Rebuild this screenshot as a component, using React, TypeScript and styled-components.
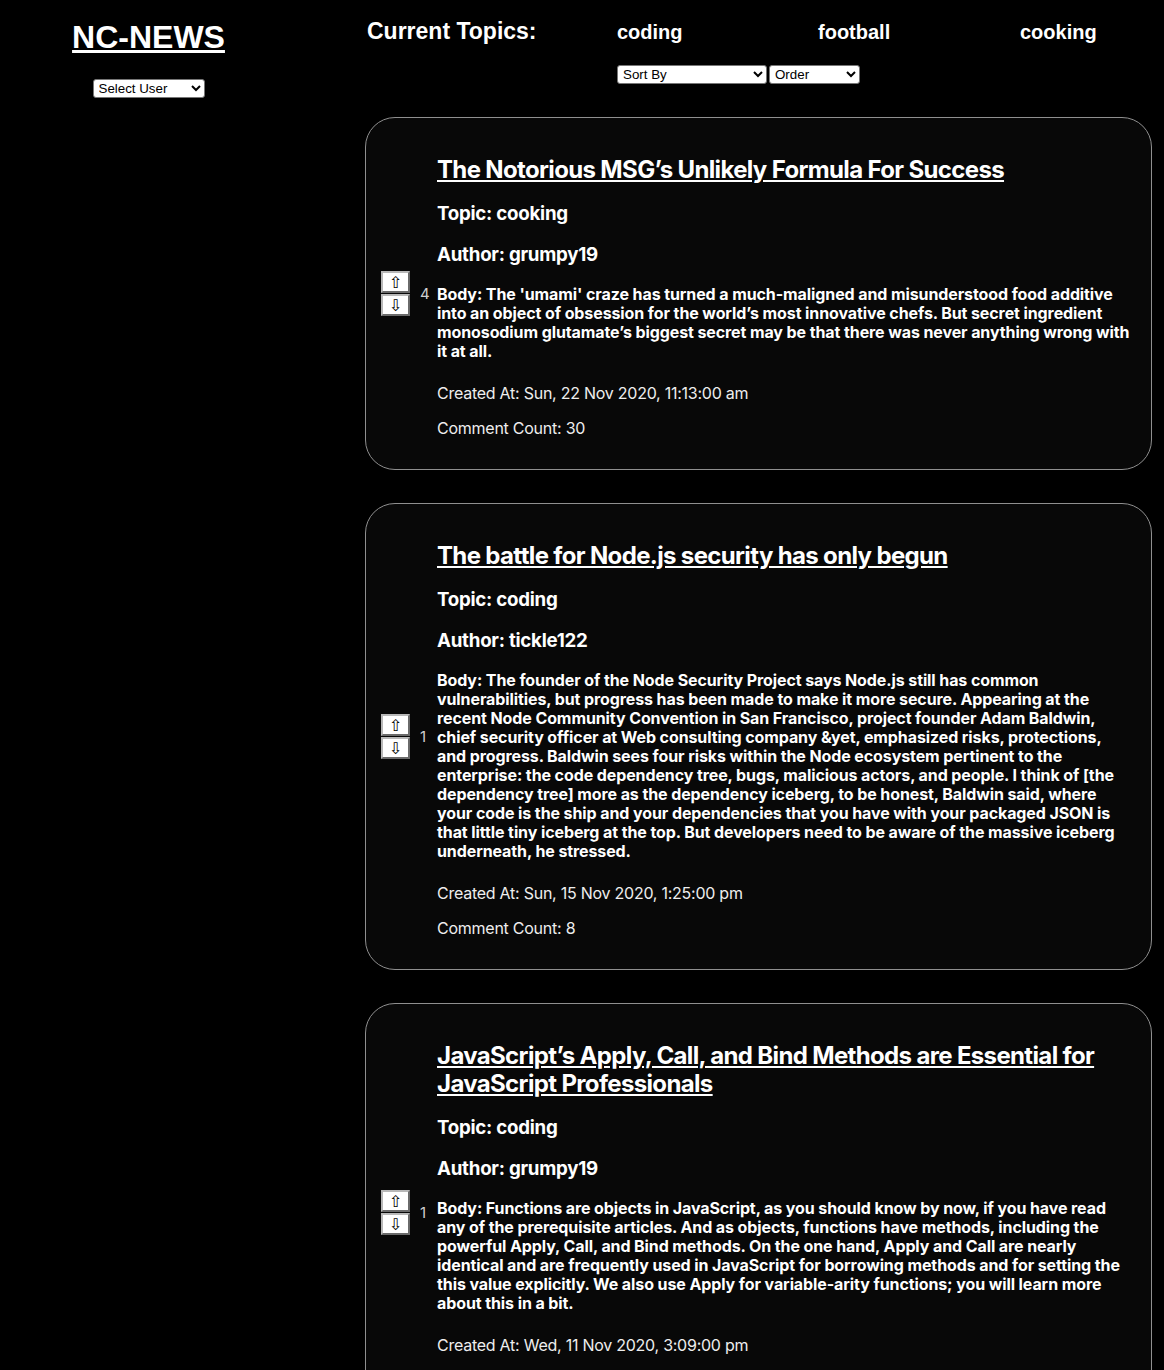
import React from "react";
import styled, { createGlobalStyle } from "styled-components";

const GlobalStyle = createGlobalStyle`
  html, body { margin: 0; padding: 0; background: #000; }
  body { color: #fff; font-family: Inter, "Noto Sans", sans-serif; }
`;

const Page = styled.div`
  display: grid;
  grid-template-columns: 297px 787px;
  column-gap: 68px;
  align-items: start;
  min-height: 1370px;
`;

const Sidebar = styled.aside`
  display: flex;
  flex-direction: column;
  align-items: center;
  padding-top: 19px;
`;

const Logo = styled.h1`
  margin: 0 0 23px;
  font-family: "Liberation Sans", Arial, sans-serif;
  font-size: 32px;
  line-height: 37px;
  font-weight: 700;
  a { color: #fff; text-decoration: underline; }
`;

const Dropdown = styled.select<{ $w: number }>`
  width: ${(p) => p.$w}px;
  height: 19px;
  box-sizing: border-box;
  font-family: "Liberation Sans", Arial, sans-serif;
  font-size: 13.33px;
  background: #fff;
  color: #000;
  border: 1px solid #767676;
  border-radius: 3px;
  padding: 0 0 0 1px;
  margin: 0;
`;

const Main = styled.main`
  display: flex;
  flex-direction: column;
  padding-top: 18px;
`;

const TopicsBar = styled.nav`
  display: grid;
  grid-template-columns: 252px 201px 202px auto;
  align-items: baseline;
  row-gap: 21px;
  font-family: "Liberation Sans", Arial, sans-serif;
`;

const BarTitle = styled.h2`
  margin: 0;
  padding-left: 2px;
  font-size: 23px;
  line-height: 26px;
  font-weight: 700;
`;

const TopicLink = styled.a`
  font-size: 20px;
  line-height: 23px;
  font-weight: 700;
  color: #fff;
  text-decoration: none;
`;

const Controls = styled.div`
  grid-column: 2 / -1;
  display: flex;
  gap: 2px;
`;

const CardList = styled.section`
  display: flex;
  flex-direction: column;
  gap: 33px;
  margin-top: 33px;
`;

const Card = styled.article`
  display: grid;
  grid-template-columns: 56px 1fr;
  align-items: center;
  border: 1px solid #8f8f8f;
  border-radius: 30px;
  background: #080808;
  padding: 31px 19px 31px 15px;
`;

const Vote = styled.div`
  display: flex;
  align-items: center;
  gap: 10px;
`;

const VoteButtons = styled.div`
  display: flex;
  flex-direction: column;
  gap: 1px;
`;

const VoteButton = styled.button`
  width: 29px;
  height: 22px;
  box-sizing: border-box;
  padding: 0;
  background: #fff;
  color: #000;
  border: 2px solid;
  border-color: #b8b8b8 #6a6a6a #6a6a6a #b8b8b8;
  font-family: "DejaVu Sans", sans-serif;
  font-size: 16px;
  line-height: 17px;
`;

const VoteCount = styled.span`
  font-size: 15px;
  line-height: 18px;
  color: #d0d0d0;
`;

const Content = styled.div`
  padding-top: 7px;
`;

const Title = styled.h2`
  margin: 0;
  font-size: 24px;
  line-height: 28px;
  font-weight: 700;
  letter-spacing: -0.65px;
  a { color: #fff; text-decoration: underline; }
`;

const Meta = styled.h3<{ $gap: number }>`
  margin: ${(p) => p.$gap}px 0 0;
  font-size: 18.72px;
  line-height: 23px;
  font-weight: 700;
  letter-spacing: -0.25px;
`;

const Body = styled.p`
  margin: 19px 0 0;
  font-size: 16px;
  line-height: 19px;
  font-weight: 700;
  letter-spacing: -0.1px;
`;

const Info = styled.p<{ $gap: number }>`
  margin: ${(p) => p.$gap}px 0 0;
  font-size: 16px;
  line-height: 19px;
  font-weight: 400;
  letter-spacing: -0.25px;
  color: #eeeeee;
`;

type Article = {
  title: string;
  topic: string;
  author: string;
  body: string;
  created: string;
  comments: number;
  votes: number;
};

const articles: Article[] = [
  {
    title: "The Notorious MSG’s Unlikely Formula For Success",
    topic: "cooking",
    author: "grumpy19",
    body: "The 'umami' craze has turned a much-maligned and misunderstood food additive into an object of obsession for the world’s most innovative chefs. But secret ingredient monosodium glutamate’s biggest secret may be that there was never anything wrong with it at all.",
    created: "Sun, 22 Nov 2020, 11:13:00 am",
    comments: 30,
    votes: 4,
  },
  {
    title: "The battle for Node.js security has only begun",
    topic: "coding",
    author: "tickle122",
    body: "The founder of the Node Security Project says Node.js still has common vulnerabilities, but progress has been made to make it more secure. Appearing at the recent Node Community Convention in San Francisco, project founder Adam Baldwin, chief security officer at Web consulting company &yet, emphasized risks, protections, and progress. Baldwin sees four risks within the Node ecosystem pertinent to the enterprise: the code dependency tree, bugs, malicious actors, and people. I think of [the dependency tree] more as the dependency iceberg, to be honest, Baldwin said, where your code is the ship and your dependencies that you have with your packaged JSON is that little tiny iceberg at the top. But developers need to be aware of the massive iceberg underneath, he stressed.",
    created: "Sun, 15 Nov 2020, 1:25:00 pm",
    comments: 8,
    votes: 1,
  },
  {
    title: "JavaScript’s Apply, Call, and Bind Methods are Essential for JavaScript Professionals",
    topic: "coding",
    author: "grumpy19",
    body: "Functions are objects in JavaScript, as you should know by now, if you have read any of the prerequisite articles. And as objects, functions have methods, including the powerful Apply, Call, and Bind methods. On the one hand, Apply and Call are nearly identical and are frequently used in JavaScript for borrowing methods and for setting the this value explicitly. We also use Apply for variable-arity functions; you will learn more about this in a bit.",
    created: "Wed, 11 Nov 2020, 3:09:00 pm",
    comments: 11,
    votes: 1,
  },
];

const ArticleCard = ({ a }: { a: Article }) => (
  <Card>
    <Vote>
      <VoteButtons>
        <VoteButton aria-label="upvote">⇧</VoteButton>
        <VoteButton aria-label="downvote">⇩</VoteButton>
      </VoteButtons>
      <VoteCount>{a.votes}</VoteCount>
    </Vote>
    <Content>
      <Title>
        <a href="#">{a.title}</a>
      </Title>
      <Meta $gap={17.5}>Topic: {a.topic}</Meta>
      <Meta $gap={18.5}>Author: {a.author}</Meta>
      <Body>Body: {a.body}</Body>
      <Info $gap={23}>Created At: {a.created}</Info>
      <Info $gap={16}>Comment Count: {a.comments}</Info>
    </Content>
  </Card>
);

export default function App() {
  return (
    <>
      <GlobalStyle />
      <Page>
        <Sidebar>
          <Logo>
            <a href="#">NC-NEWS</a>
          </Logo>
          <Dropdown $w={112} defaultValue="">
            <option value="">Select User</option>
            <option value="grumpy19">grumpy19</option>
            <option value="tickle122">tickle122</option>
          </Dropdown>
        </Sidebar>
        <Main>
          <TopicsBar>
            <BarTitle>Current Topics:</BarTitle>
            <TopicLink href="#">coding</TopicLink>
            <TopicLink href="#">football</TopicLink>
            <TopicLink href="#">cooking</TopicLink>
            <Controls>
              <Dropdown $w={150} defaultValue="">
                <option value="">Sort By</option>
                <option value="created_at">Date</option>
                <option value="votes">Votes</option>
              </Dropdown>
              <Dropdown $w={91} defaultValue="">
                <option value="">Order</option>
                <option value="asc">Ascending</option>
                <option value="desc">Descending</option>
              </Dropdown>
            </Controls>
          </TopicsBar>
          <CardList>
            {articles.map((a, i) => (
              <ArticleCard key={i} a={a} />
            ))}
          </CardList>
        </Main>
      </Page>
    </>
  );
}
